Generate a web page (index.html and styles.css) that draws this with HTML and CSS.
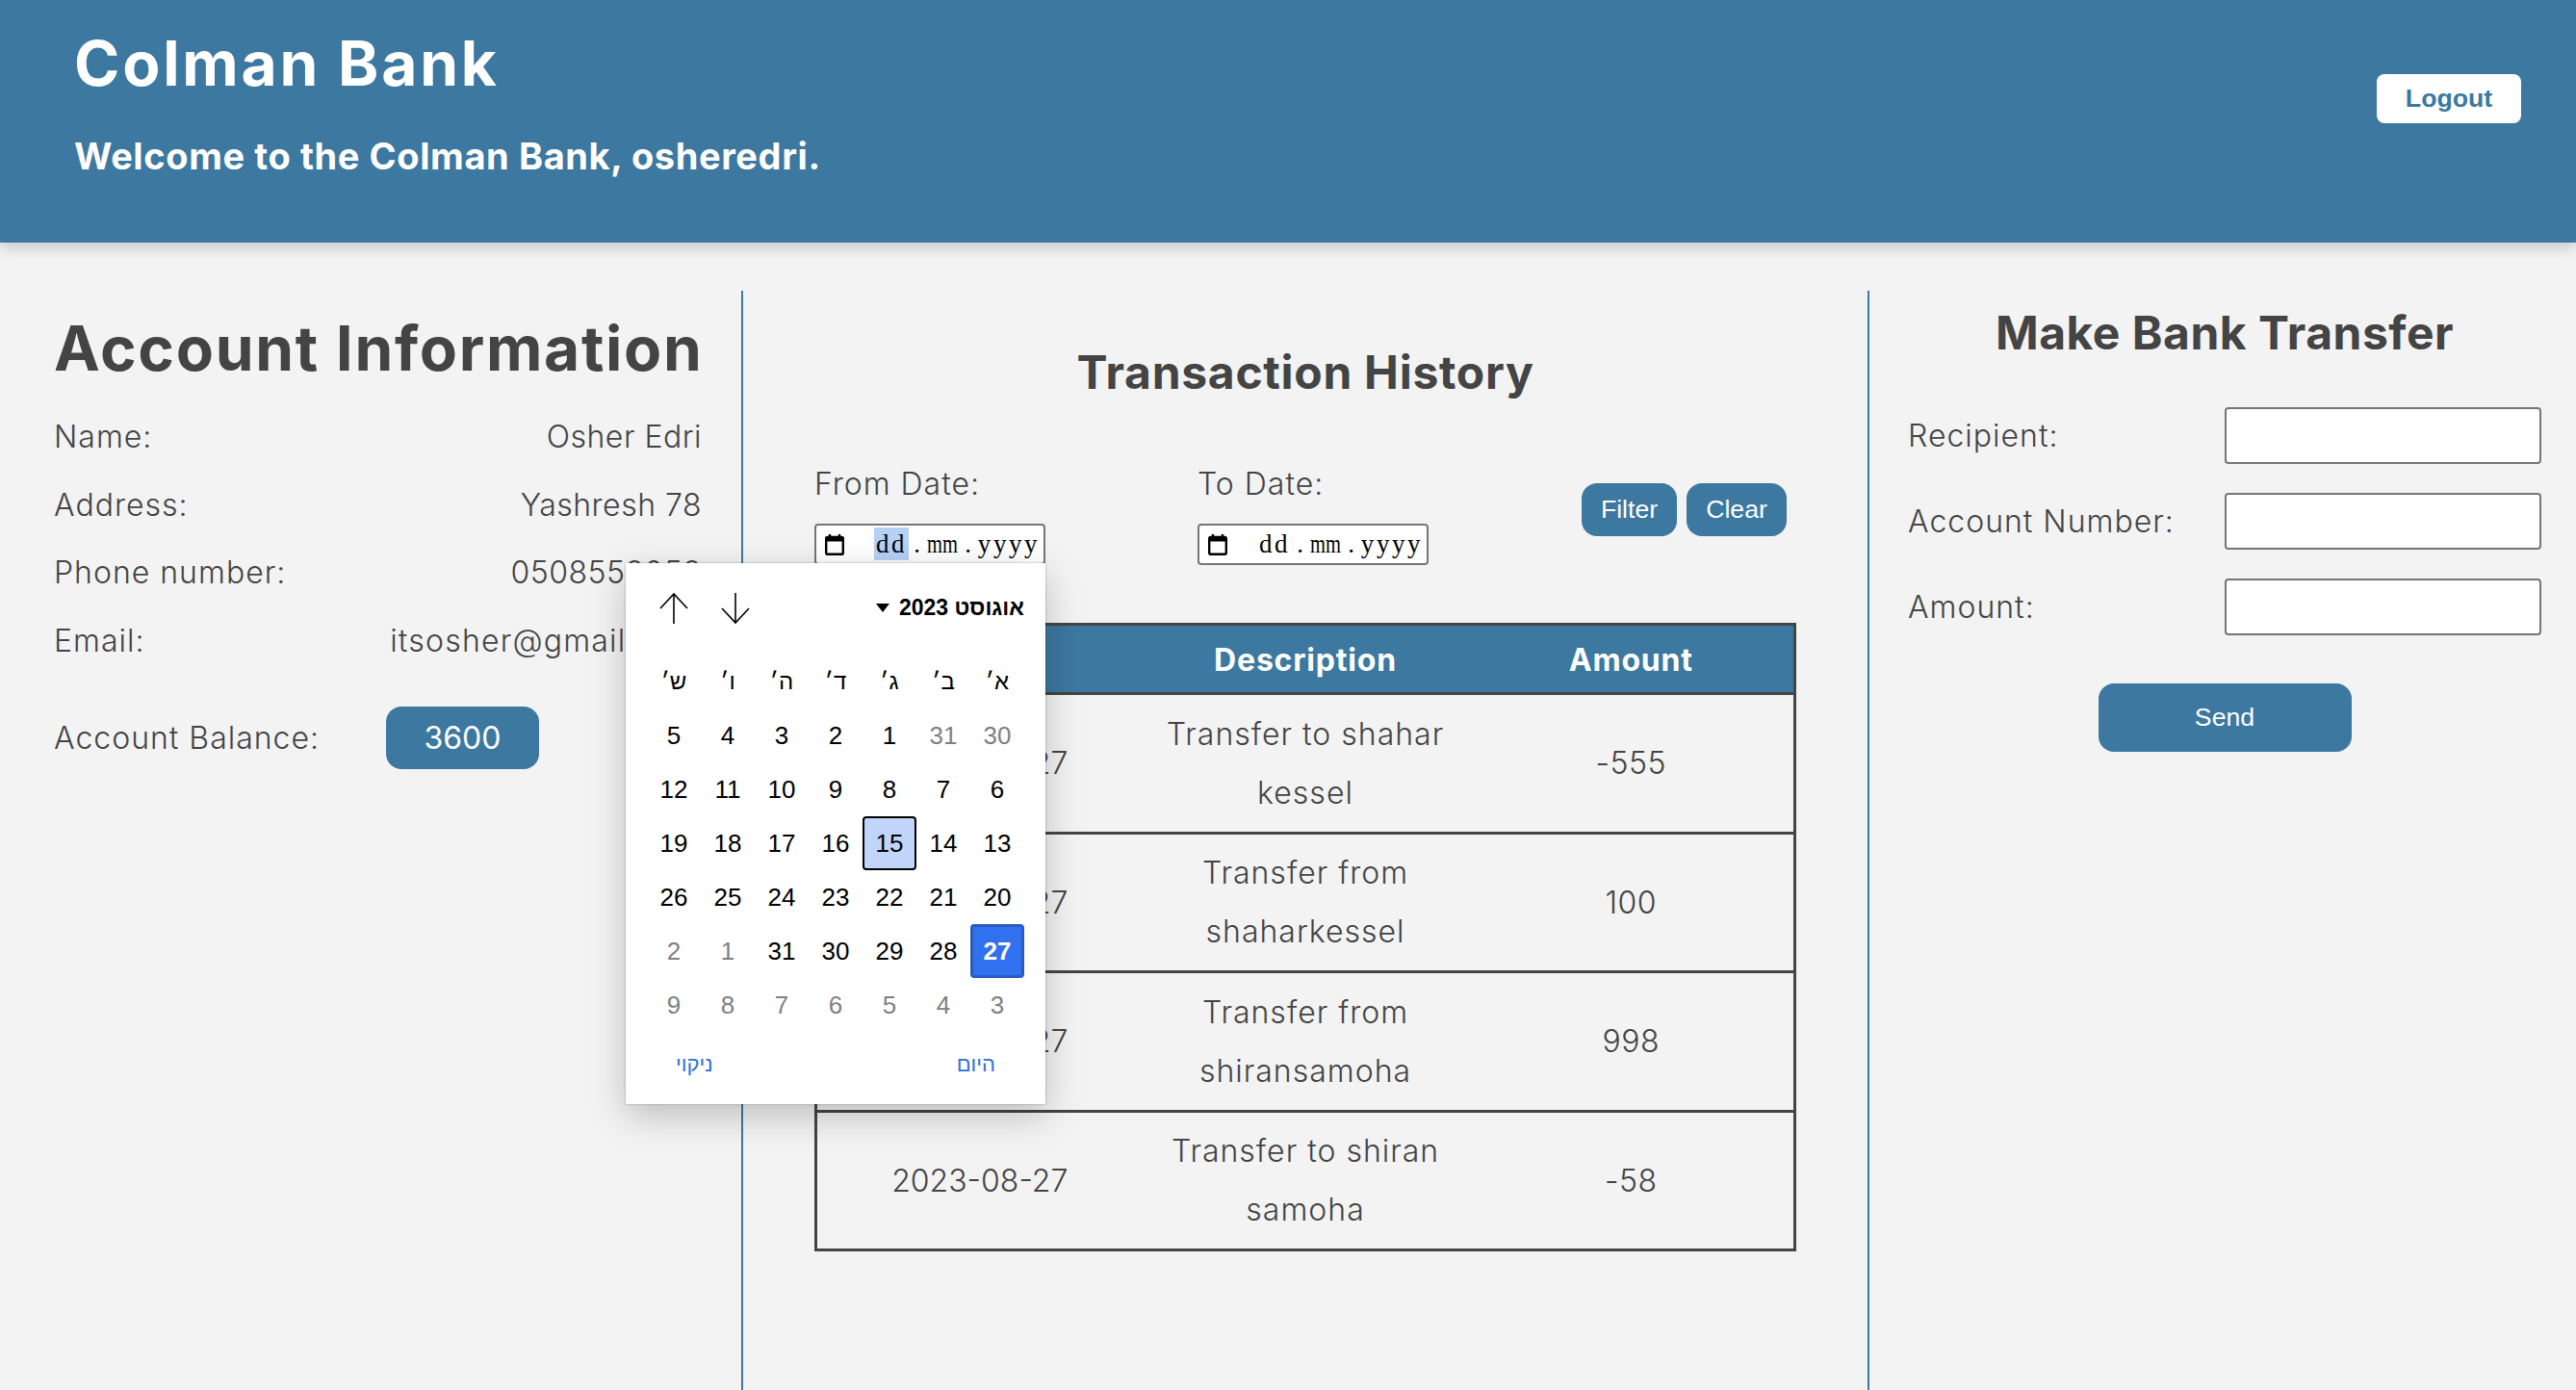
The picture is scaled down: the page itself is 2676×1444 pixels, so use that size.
FILE: index.html
```html
<!DOCTYPE html>
<html lang="en">
<head>
  <meta charset="UTF-8">
  <meta name="viewport" content="width=device-width, initial-scale=1.0">
  <title>Colman Bank</title>
  <link rel="stylesheet" href="styles.css">
</head>
<body>
  <header class="top-bar">
    <div class="top-text">
      <h1>Colman Bank</h1>
      <p>Welcome to the Colman Bank, osheredri.</p>
    </div>
    <button class="logout-btn">Logout</button>
  </header>

  <main class="columns">
    <section class="col col-account">
      <h2 class="account-title">Account Information</h2>
      <div class="info-row"><span>Name:</span><span class="info-value">Osher Edri</span></div>
      <div class="info-row"><span>Address:</span><span class="info-value">Yashresh 78</span></div>
      <div class="info-row"><span>Phone number:</span><span class="info-value">0508553053</span></div>
      <div class="info-row"><span>Email:</span><span class="info-value info-email">itsosher@gmail.com</span></div>
      <div class="balance-row">
        <span class="balance-label">Account Balance:</span>
        <span class="balance-pill">3600</span>
      </div>
    </section>

    <section class="col col-history">
      <h2 class="history-title">Transaction History</h2>
      <div class="filter-row">
        <div class="filter-group">
          <label>From Date:</label>
          <div class="date-field">
            <svg class="cal-icon" viewBox="0 0 20 22"><path d="M5 0v3M15 0v3" stroke="#000" stroke-width="2.4" fill="none"/><rect x="1.2" y="3" width="17.6" height="17.8" rx="1.6" fill="none" stroke="#000" stroke-width="2.4"/><rect x="1" y="3" width="18" height="4.5" fill="#000"/></svg>
            <span class="date-text"><span class="date-part part-dd is-active">dd</span><span class="date-sep">.</span><span class="date-part part-mm">mm</span><span class="date-sep">.</span><span class="date-part part-yyyy">yyyy</span></span>

            <div class="picker" dir="rtl" lang="he">
              <div class="picker-head">
                <span class="picker-month">אוגוסט 2023
                  <svg class="caret" viewBox="0 0 14 9"><path d="M0 0h14L7 9z" fill="#000"/></svg>
                </span>
                <span class="picker-arrows">
                  <svg class="arrow" viewBox="0 0 32 34"><path d="M16 33V2M2 17L16 2l14 15" fill="none" stroke="#000" stroke-width="1.6"/></svg>
                  <svg class="arrow" viewBox="0 0 32 34"><path d="M16 1v31M2 17l14 15 14-15" fill="none" stroke="#000" stroke-width="1.6"/></svg>
                </span>
              </div>
              <div class="picker-grid">
                <span class="wd">א׳</span><span class="wd">ב׳</span><span class="wd">ג׳</span><span class="wd">ד׳</span><span class="wd">ה׳</span><span class="wd">ו׳</span><span class="wd">ש׳</span>
                <span class="day off">30</span><span class="day off">31</span><span class="day">1</span><span class="day">2</span><span class="day">3</span><span class="day">4</span><span class="day">5</span>
                <span class="day">6</span><span class="day">7</span><span class="day">8</span><span class="day">9</span><span class="day">10</span><span class="day">11</span><span class="day">12</span>
                <span class="day">13</span><span class="day">14</span><span class="day focus">15</span><span class="day">16</span><span class="day">17</span><span class="day">18</span><span class="day">19</span>
                <span class="day">20</span><span class="day">21</span><span class="day">22</span><span class="day">23</span><span class="day">24</span><span class="day">25</span><span class="day">26</span>
                <span class="day today">27</span><span class="day">28</span><span class="day">29</span><span class="day">30</span><span class="day">31</span><span class="day off">1</span><span class="day off">2</span>
                <span class="day off">3</span><span class="day off">4</span><span class="day off">5</span><span class="day off">6</span><span class="day off">7</span><span class="day off">8</span><span class="day off">9</span>
              </div>
              <div class="picker-foot">
                <span>היום</span>
                <span>ניקוי</span>
              </div>
            </div>
          </div>
        </div>

        <div class="filter-group">
          <label>To Date:</label>
          <div class="date-field">
            <svg class="cal-icon" viewBox="0 0 20 22"><path d="M5 0v3M15 0v3" stroke="#000" stroke-width="2.4" fill="none"/><rect x="1.2" y="3" width="17.6" height="17.8" rx="1.6" fill="none" stroke="#000" stroke-width="2.4"/><rect x="1" y="3" width="18" height="4.5" fill="#000"/></svg>
            <span class="date-text"><span class="date-part part-dd">dd</span><span class="date-sep">.</span><span class="date-part part-mm">mm</span><span class="date-sep">.</span><span class="date-part part-yyyy">yyyy</span></span>
          </div>
        </div>

        <div class="filter-btns">
          <button class="btn btn-filter">Filter</button>
          <button class="btn btn-clear">Clear</button>
        </div>
      </div>

      <table class="tx-table">
        <thead>
          <tr><th>Date</th><th>Description</th><th>Amount</th></tr>
        </thead>
        <tbody>
          <tr><td>2023-08-27</td><td>Transfer to shahar<br>kessel</td><td>-555</td></tr>
          <tr><td>2023-08-27</td><td>Transfer from<br>shaharkessel</td><td>100</td></tr>
          <tr><td>2023-08-27</td><td>Transfer from<br>shiransamoha</td><td>998</td></tr>
          <tr><td>2023-08-27</td><td>Transfer to shiran<br>samoha</td><td>-58</td></tr>
        </tbody>
      </table>
    </section>

    <section class="col col-transfer">
      <h2 class="transfer-title">Make Bank Transfer</h2>
      <form class="transfer-form">
        <label>Recipient:</label><input type="text">
        <label>Account Number:</label><input type="text">
        <label>Amount:</label><input type="text">
      </form>
      <button class="btn btn-send">Send</button>
    </section>
  </main>
</body>
</html>
```

FILE: styles.css
```css
html, body {
  margin: 0;
  padding: 0;
  height: 100%;
  overflow: hidden;
}
body {
  background: #f3f3f3;
  color: #444;
  font-family: Inter, 'Noto Sans', sans-serif;
  font-size: 32px;
  font-weight: 300;
  letter-spacing: 1px;
}

.top-bar {
  position: relative;
  z-index: 2;
  display: flex;
  justify-content: space-between;
  align-items: flex-start;
  height: 252px;
  padding: 0 57px 0 77px;
  background: #3c78a0;
  box-shadow: 0 4px 16px rgba(0,0,0,0.2);
  color: #fff;
}
.top-bar h1 {
  margin: 24px 0 0;
  font-size: 64px;
  line-height: 84px;
  font-weight: 700;
  letter-spacing: 2.8px;
}
.top-bar p {
  margin: 33px 0 0;
  font-size: 38px;
  line-height: 42px;
  font-weight: 700;
  letter-spacing: 0.6px;
}
.logout-btn {
  width: 150px;
  height: 51px;
  margin-top: 77px;
  border: none;
  border-radius: 8px;
  background: #fff;
  color: #3c78a0;
  font-family: 'Liberation Sans', sans-serif;
  font-size: 26.67px;
  font-weight: 700;
  letter-spacing: 0;
}

.columns {
  display: flex;
  height: calc(100vh - 302px);
  padding-top: 50px;
}
.col {
  box-sizing: border-box;
}
.col-account {
  width: 772px;
  padding: 0 41px 0 56px;
  border-right: 2px solid #3c78a0;
}
.col-history {
  width: 1170px;
  padding: 0 74px;
  border-right: 2px solid #3c78a0;
}
.col-transfer {
  flex: 1;
  padding: 0 36px 0 40px;
  text-align: center;
}

h2 {
  margin: 0;
  font-weight: 700;
}
.account-title {
  margin: 20px 0 17px;
  font-size: 64px;
  line-height: 80px;
  letter-spacing: 1.7px;
  white-space: nowrap;
}
.info-row {
  display: flex;
  justify-content: space-between;
  height: 70.5px;
  line-height: 70.5px;
  white-space: nowrap;
}
.info-value {
  letter-spacing: 0.5px;
}
.info-value.info-email {
  letter-spacing: 1.2px;
}
.balance-row {
  display: flex;
  align-items: center;
  margin-top: 33px;
}
.balance-label {
  width: 345px;
}
.balance-pill {
  width: 159px;
  height: 65px;
  border-radius: 16px;
  background: #3c78a0;
  color: #fff;
  font-weight: 400;
  letter-spacing: 0;
  line-height: 65px;
  text-align: center;
}

.history-title {
  margin: 55px 0 62px;
  font-size: 48px;
  line-height: 60px;
  letter-spacing: 0.7px;
  text-align: center;
}
.filter-row {
  display: flex;
  margin-bottom: 60px;
}
.filter-group {
  width: 398px;
}
.filter-group label {
  display: block;
  height: 48px;
  margin-bottom: 17px;
  line-height: 48px;
}
.date-field {
  position: relative;
  box-sizing: border-box;
  display: flex;
  align-items: center;
  justify-content: space-between;
  width: 240px;
  height: 43px;
  padding: 0 2px 0 9px;
  border: 2px solid #767676;
  border-radius: 4px;
  background: #fff;
  color: #000;
}
.cal-icon {
  width: 20px;
  height: 22px;
}
/* the reference shows a slab serif here, set to a fixed pitch by hand */
.date-text {
  display: flex;
  margin-bottom: 2px;
  font-family: 'Liberation Serif', serif;
  font-size: 27px;
  font-weight: 400;
  line-height: 34px;
  letter-spacing: 0;
}
.date-part {
  display: flex;
  justify-content: center;
}
.part-dd {
  width: 36px;
  letter-spacing: 2.6px;
}
.part-mm {
  width: 36px;
  transform: scaleX(0.76);
}
.part-yyyy {
  width: 68px;
  letter-spacing: 2.6px;
}
.date-part.is-active {
  background: #b7d0f6;
}
.date-sep {
  width: 17px;
  text-align: center;
}

.filter-btns {
  display: flex;
  gap: 10px;
  margin: 23px 0 0 1px;
}
.btn {
  height: 55px;
  padding: 0;
  border: none;
  border-radius: 16px;
  background: #3c78a0;
  color: #fff;
  font-family: 'Liberation Sans', sans-serif;
  font-size: 26.67px;
  letter-spacing: 0;
}
.btn-filter {
  width: 99px;
}
.btn-clear {
  width: 104px;
}

.tx-table {
  width: 100%;
  border-collapse: collapse;
  border: 3px solid #444;
  table-layout: fixed;
  text-align: center;
}
.tx-table th {
  height: 67px;
  padding: 2px 0 0;
  background: #3c78a0;
  color: #fff;
  font-weight: 700;
  letter-spacing: 0.8px;
}
.tx-table td {
  height: 141.5px;
  padding: 0;
  border-top: 3px solid #444;
  line-height: 61px;
}
.tx-table td:first-child {
  letter-spacing: 0;
}
.tx-table td:last-child {
  letter-spacing: 0.5px;
}

.transfer-title {
  margin: 14px 0 47px;
  font-size: 48px;
  line-height: 60px;
  letter-spacing: 0.5px;
}
.transfer-form {
  display: grid;
  grid-template-columns: 329px 329px;
  grid-auto-rows: 59px;
  row-gap: 30px;
  align-items: center;
  text-align: left;
}
.transfer-form input {
  box-sizing: border-box;
  width: 100%;
  height: 59px;
  border: 2px solid #767676;
  border-radius: 4px;
  background: #fff;
}
.btn-send {
  width: 263px;
  height: 71px;
  margin-top: 50px;
}

/* open date picker, hangs under the From Date field */
.picker {
  position: absolute;
  z-index: 5;
  top: 100%;
  right: -2px;
  box-sizing: border-box;
  width: 436px;
  height: 562px;
  padding: 0 22px;
  background: #fff;
  box-shadow: 0 0 2px rgba(0,0,0,0.35), 0 12px 36px rgba(0,0,0,0.22);
  font-family: 'Liberation Sans', sans-serif;
  font-size: 26px;
  font-weight: 400;
  letter-spacing: 0;
  color: #000;
}
.picker-head {
  display: flex;
  justify-content: space-between;
  align-items: center;
  height: 95px;
  padding-bottom: 2px;
  box-sizing: border-box;
}
.picker-month {
  display: flex;
  align-items: center;
  gap: 10px;
  font-size: 23px;
  font-weight: 700;
}
.caret {
  width: 14px;
  height: 9px;
}
.picker-arrows {
  display: flex;
  flex-direction: row-reverse;
  gap: 32px;
  margin-left: 12px;
}
.arrow {
  width: 32px;
  height: 34px;
}
.picker-grid {
  display: grid;
  grid-template-columns: repeat(7, 56px);
  grid-auto-rows: 56px;
}
.wd, .day {
  box-sizing: border-box;
  display: flex;
  align-items: center;
  justify-content: center;
}
.wd {
  font-size: 24px;
}
.day.off {
  color: #808080;
}
.day.focus {
  border: 2px solid #000;
  border-radius: 4px;
  background: #c1d5fa;
}
.day.today {
  border: 3px solid #2a5cc0;
  border-radius: 4px;
  background: #3170ee;
  color: #fff;
  font-weight: 700;
}
.picker-foot {
  display: flex;
  justify-content: space-between;
  margin-top: 17px;
  padding: 0 30px;
  color: #2f71d4;
  font-size: 22px;
  line-height: 34px;
}
```
